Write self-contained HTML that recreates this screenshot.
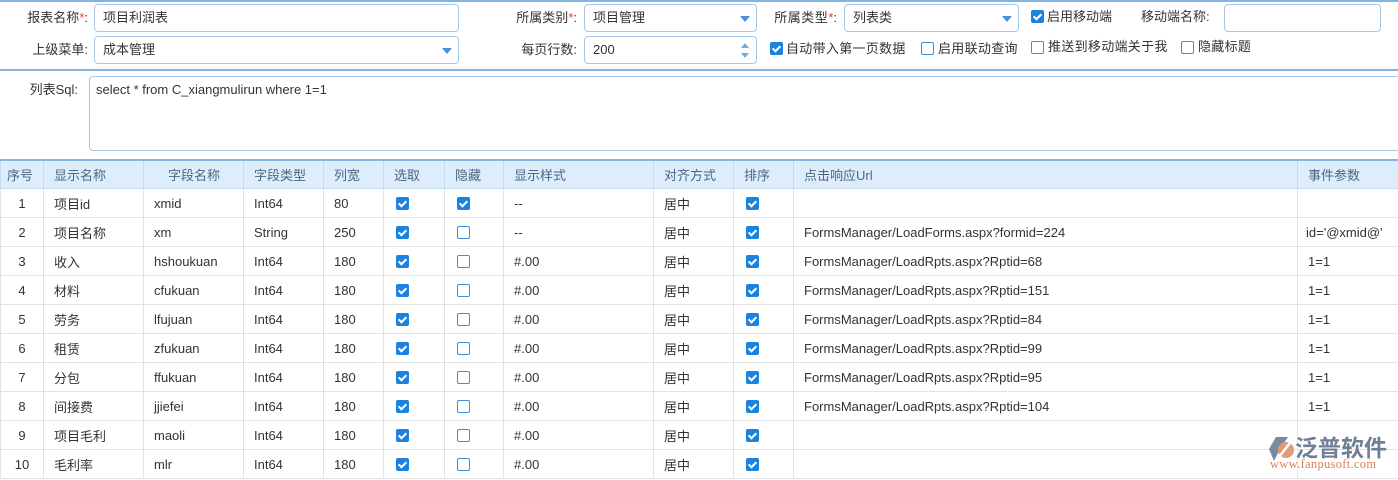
<!DOCTYPE html>
<html><head><meta charset="utf-8"><style>
*{box-sizing:border-box;margin:0;padding:0}
body{width:1398px;height:480px;overflow:hidden;background:#fff;font-family:"Liberation Sans","Noto Sans CJK SC",sans-serif;font-size:13px;color:#333;position:relative}
.a{position:absolute;white-space:nowrap}
.inp{position:absolute;border:1px solid #a9c8e6;border-radius:4px;background:#fff;height:28px;line-height:26px;padding-left:8px}
.tri{position:absolute;right:6px;top:11px;width:0;height:0;border-left:5px solid transparent;border-right:5px solid transparent;border-top:6px solid #4a8fd8}
.lbl{position:absolute;text-align:right;line-height:28px}
.req{color:#e33}
.cb{position:absolute;width:13px;height:13px;border:1px solid #3f8fe0;border-radius:2px;background:#fff}
.cb.on{background:#1a83e0;border-color:#1a83e0}
.cb.on::after{content:"";position:absolute;left:3px;top:1px;width:3px;height:6px;border:solid #fff;border-width:0 2px 2px 0;transform:rotate(45deg)}
table{position:absolute;left:0;top:159px;border-collapse:collapse;table-layout:fixed;width:1398px;border-top:2px solid #82b5e3}
td,th{height:29px;border:1px solid #e2e2e2;padding-left:10px;padding-top:1px;text-align:left;font-weight:normal;white-space:nowrap;overflow:hidden;position:relative}
th{background:#deedfb;color:#4d6680;border-color:#c5dcf0;height:28px}
td.c{text-align:center;padding-left:0}
td .cb{left:12px;top:8px}
</style></head><body>
<div class="a" style="left:0;top:0;width:1398px;height:2px;background:#82b5e3"></div>

<div class="lbl" style="left:0;top:4px;width:88px">报表名称<span class="req">*</span>:</div>
<div class="inp" style="left:94px;top:4px;width:365px">项目利润表</div>
<div class="lbl" style="left:470px;top:4px;width:107px">所属类别<span class="req">*</span>:</div>
<div class="inp" style="left:584px;top:4px;width:173px">项目管理<div class="tri"></div></div>
<div class="lbl" style="left:740px;top:4px;width:97px"><span style="letter-spacing:0.5px">所属类型</span><span class="req">*</span>:</div>
<div class="inp" style="left:844px;top:4px;width:175px">列表类<div class="tri"></div></div>
<div class="cb on" style="left:1031px;top:10px"></div>
<div class="a" style="left:1047px;top:9px;line-height:16px">启用移动端</div>
<div class="a" style="left:1141px;top:9px;line-height:16px">移动端名称:</div>
<div class="inp" style="left:1224px;top:4px;width:157px"></div>

<div class="lbl" style="left:0;top:36px;width:88px">上级菜单:</div>
<div class="inp" style="left:94px;top:36px;width:365px">成本管理<div class="tri"></div></div>
<div class="lbl" style="left:470px;top:36px;width:107px">每页行数:</div>
<div class="inp" style="left:584px;top:36px;width:173px">200
 <div style="position:absolute;right:7px;top:6px;width:0;height:0;border-left:4px solid transparent;border-right:4px solid transparent;border-bottom:5px solid #7aa8d8"></div>
 <div style="position:absolute;right:7px;top:16px;width:0;height:0;border-left:4px solid transparent;border-right:4px solid transparent;border-top:5px solid #7aa8d8"></div>
</div>
<div class="cb on" style="left:770px;top:42px"></div>
<div class="a" style="left:786px;top:41px;line-height:16px;letter-spacing:0.3px">自动带入第一页数据</div>
<div class="cb" style="left:921px;top:42px"></div>
<div class="a" style="left:938px;top:41px;line-height:16px;letter-spacing:0.3px">启用联动查询</div>
<div class="cb" style="left:1031px;top:41px"></div>
<div class="a" style="left:1048px;top:39px;line-height:16px;letter-spacing:0.3px">推送到移动端关于我</div>
<div class="cb" style="left:1181px;top:41px"></div>
<div class="a" style="left:1198px;top:39px;line-height:16px;letter-spacing:0.3px">隐藏标题</div>

<div class="a" style="left:0;top:69px;width:1398px;height:2px;background:#82b5e3"></div>
<div class="lbl" style="left:0;top:78px;width:78px;line-height:24px">列表Sql:</div>
<div class="a" style="left:89px;top:76px;width:1315px;height:75px;border:1px solid #a9c8e6;border-radius:4px;padding:5px 6px;line-height:16px">select * from C_xiangmulirun where 1=1</div>

<table>
<colgroup><col style="width:43px"><col style="width:100px"><col style="width:100px"><col style="width:80px"><col style="width:60px"><col style="width:61px"><col style="width:59px"><col style="width:150px"><col style="width:80px"><col style="width:60px"><col style="width:504px"><col style="width:101px"></colgroup>
<tr><th style="padding-left:6px">序号</th><th>显示名称</th><th style="padding-left:24px">字段名称</th><th>字段类型</th><th>列宽</th><th>选取</th><th>隐藏</th><th>显示样式</th><th>对齐方式</th><th>排序</th><th>点击响应Url</th><th>事件参数</th></tr>
<tr><td class="c">1</td><td>项目id</td><td>xmid</td><td>Int64</td><td>80</td><td><div class="cb on"></div></td><td><div class="cb on"></div></td><td>--</td><td>居中</td><td><div class="cb on"></div></td><td></td><td></td></tr>
<tr><td class="c">2</td><td>项目名称</td><td>xm</td><td>String</td><td>250</td><td><div class="cb on"></div></td><td><div class="cb"></div></td><td>--</td><td>居中</td><td><div class="cb on"></div></td><td>FormsManager/LoadForms.aspx?formid=224</td><td style="padding-left:8px">id='@xmid@'</td></tr>
<tr><td class="c">3</td><td>收入</td><td>hshoukuan</td><td>Int64</td><td>180</td><td><div class="cb on"></div></td><td><div class="cb"></div></td><td>#.00</td><td>居中</td><td><div class="cb on"></div></td><td>FormsManager/LoadRpts.aspx?Rptid=68</td><td>1=1</td></tr>
<tr><td class="c">4</td><td>材料</td><td>cfukuan</td><td>Int64</td><td>180</td><td><div class="cb on"></div></td><td><div class="cb"></div></td><td>#.00</td><td>居中</td><td><div class="cb on"></div></td><td>FormsManager/LoadRpts.aspx?Rptid=151</td><td>1=1</td></tr>
<tr><td class="c">5</td><td>劳务</td><td>lfujuan</td><td>Int64</td><td>180</td><td><div class="cb on"></div></td><td><div class="cb"></div></td><td>#.00</td><td>居中</td><td><div class="cb on"></div></td><td>FormsManager/LoadRpts.aspx?Rptid=84</td><td>1=1</td></tr>
<tr><td class="c">6</td><td>租赁</td><td>zfukuan</td><td>Int64</td><td>180</td><td><div class="cb on"></div></td><td><div class="cb"></div></td><td>#.00</td><td>居中</td><td><div class="cb on"></div></td><td>FormsManager/LoadRpts.aspx?Rptid=99</td><td>1=1</td></tr>
<tr><td class="c">7</td><td>分包</td><td>ffukuan</td><td>Int64</td><td>180</td><td><div class="cb on"></div></td><td><div class="cb"></div></td><td>#.00</td><td>居中</td><td><div class="cb on"></div></td><td>FormsManager/LoadRpts.aspx?Rptid=95</td><td>1=1</td></tr>
<tr><td class="c">8</td><td>间接费</td><td>jjiefei</td><td>Int64</td><td>180</td><td><div class="cb on"></div></td><td><div class="cb"></div></td><td>#.00</td><td>居中</td><td><div class="cb on"></div></td><td>FormsManager/LoadRpts.aspx?Rptid=104</td><td>1=1</td></tr>
<tr><td class="c">9</td><td>项目毛利</td><td>maoli</td><td>Int64</td><td>180</td><td><div class="cb on"></div></td><td><div class="cb"></div></td><td>#.00</td><td>居中</td><td><div class="cb on"></div></td><td></td><td></td></tr>
<tr><td class="c">10</td><td>毛利率</td><td>mlr</td><td>Int64</td><td>180</td><td><div class="cb on"></div></td><td><div class="cb"></div></td><td>#.00</td><td>居中</td><td><div class="cb on"></div></td><td></td><td></td></tr>
</table>

<svg class="a" style="left:1268px;top:436px" width="30" height="26" viewBox="0 0 30 26">
<path d="M8 1 L20 1 L12 13 L6 25 L1 13 Z" fill="#7a8aa0"/>
<circle cx="18" cy="14" r="8" fill="#e39a77"/>
<path d="M11 21 L22 7" stroke="#fff" stroke-width="2.5"/>
</svg>
<div class="a" style="left:1295px;top:431px;font-size:23px;color:#6f7f96;font-family:'Noto Sans CJK SC',sans-serif;line-height:30px;font-weight:bold;letter-spacing:0px">泛普软件</div>
<div class="a" style="left:1270px;top:458px;font-size:12.5px;color:#d9805a;font-family:'Liberation Serif',serif;line-height:12px;letter-spacing:0.3px">www.fanpusoft.com</div>
</body></html>
